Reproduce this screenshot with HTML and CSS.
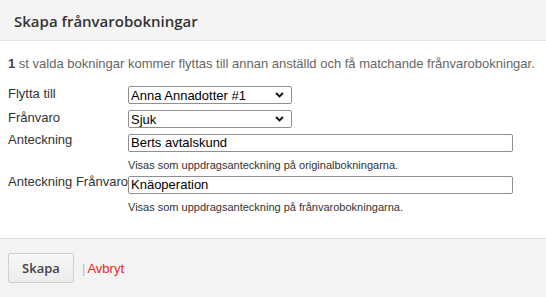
FILE: index.html
```html
<!DOCTYPE html>
<html lang="sv">
<head>
<meta charset="utf-8">
<link rel="stylesheet" href="styles.css">
</head>
<body>
<div class="dialog">
  <div class="head"><h1 class="title">Skapa frånvarobokningar</h1></div>
  <div class="body">
    <p class="intro"><b>1</b> st valda bokningar kommer flyttas till annan anställd och få matchande frånvarobokningar.</p>
    <div class="form">
      <div class="row">
        <label class="lbl">Flytta till</label>
        <div class="sel"><span>Anna Annadotter #1</span><svg class="chev" viewBox="0 0 9 6"><path d="M1 1l3.5 3.5L8 1" fill="none" stroke="#111" stroke-width="1.9"/></svg></div>
      </div>
      <div class="row">
        <label class="lbl">Frånvaro</label>
        <div class="sel"><span>Sjuk</span><svg class="chev" viewBox="0 0 9 6"><path d="M1 1l3.5 3.5L8 1" fill="none" stroke="#111" stroke-width="1.9"/></svg></div>
      </div>
      <div class="row row-note">
        <label class="lbl lbl-up">Anteckning</label>
        <div class="fld">
          <div class="inp">Berts avtalskund</div>
          <div class="help">Visas som uppdragsanteckning på originalbokningarna.</div>
        </div>
      </div>
      <div class="row row-note">
        <label class="lbl lbl-up">Anteckning Frånvaro</label>
        <div class="fld">
          <div class="inp">Knäoperation</div>
          <div class="help">Visas som uppdragsanteckning på frånvarobokningarna.</div>
        </div>
      </div>
    </div>
  </div>
  <div class="foot">
    <button class="btn">Skapa</button>
    <span class="sep">|</span>
    <a class="cancel">Avbryt</a>
  </div>
</div>
</body>
</html>
```
FILE: styles.css
```css
html, body { margin: 0; padding: 0; background: #fff; }
body { font-family: "Liberation Sans", Arial, sans-serif; color: #333; width: 546px; height: 297px; overflow: hidden; }
.dialog { display: flex; flex-direction: column; height: 297px; }
.head { height: 41px; flex: none; background: #f4f4f4; border-bottom: 1px solid #e2e2e2; box-sizing: border-box; display: flex; align-items: center; padding-left: 14px; }
.title { margin: 0; font-family: "Open Sans", sans-serif; font-weight: 600; font-size: 15px; color: #333; position: relative; top: 1px; }
.body { flex: 1; padding: 0 8px; }
.intro { margin: 15px 0 0; font-size: 13px; color: #666; line-height: 15px; }
.intro b { color: #444; }
.form { margin-top: 15px; display: flex; flex-direction: column; }
.row { display: flex; align-items: flex-start; margin-bottom: 6px; }
.row-note { margin-bottom: 4px; }
.lbl { width: 120px; font-size: 13px; color: #333; line-height: 16px; flex: none; }
.lbl-up { margin-top: -2px; }
.sel { box-sizing: border-box; width: 164px; height: 18px; border: 1px solid #8f8f8f; border-radius: 2px; display: flex; align-items: center; justify-content: space-between; padding: 0 7px 0 2px; font-size: 13px; color: #000; }
.chev { width: 9px; height: 6px; }
.fld { display: flex; flex-direction: column; }
.inp { box-sizing: border-box; width: 385px; height: 18px; border: 1px solid #8f8f8f; border-radius: 2px; padding: 0 2px; font-size: 13px; line-height: 16px; color: #000; }
.help { font-size: 11px; color: #333; margin-top: 7px; line-height: 13px; }
.foot { height: 59px; flex: none; background: #f3f3f3; border-top: 1px solid #dcdcdc; display: flex; align-items: center; padding-left: 8px; box-sizing: border-box; }
.btn { box-sizing: border-box; width: 66px; height: 30px; border: 1px solid #d0d0d0; border-radius: 2px; background: linear-gradient(#f7f7f7, #ececec); font-family: "Open Sans", sans-serif; font-weight: 600; font-size: 13px; color: #444; padding: 0; }
.sep { color: #bbb; font-size: 13px; margin-left: 8px; }
.cancel { color: #f01e1e; font-size: 13px; margin-left: 2px; }
```
